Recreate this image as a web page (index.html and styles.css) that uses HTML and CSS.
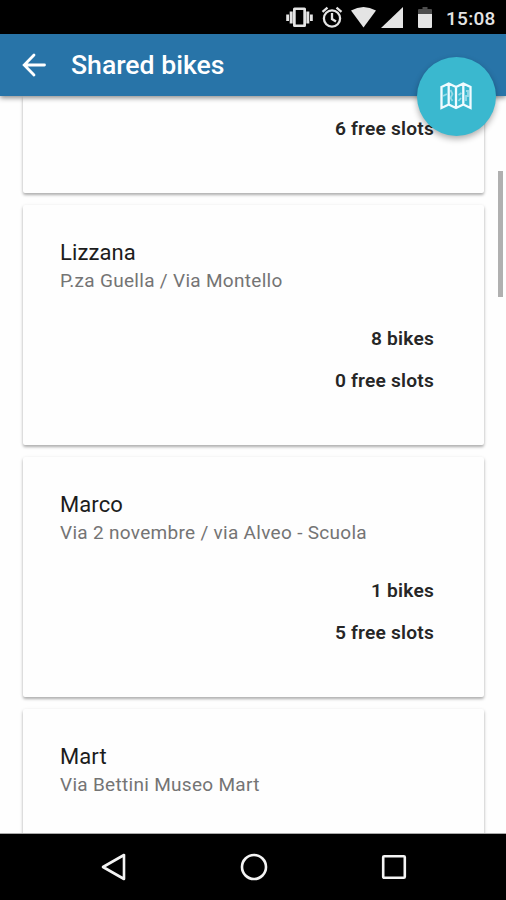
FILE: index.html
```html
<!DOCTYPE html>
<html lang="en">
<head>
<meta charset="utf-8">
<title>Shared bikes</title>
<link rel="stylesheet" href="styles.css">
</head>
<body>
<div class="screen">
  <div class="status">
    <svg class="status-icons" width="150" height="34" viewBox="284 0 150 34">
      <g fill="#e4e4e4">
        <path fill-rule="evenodd" d="M294.500 7.500h10a1.500 1.500 0 0 1 1.500 1.500v16.500a1.500 1.500 0 0 1-1.500 1.500h-10a1.500 1.500 0 0 1-1.500-1.500V9a1.500 1.500 0 0 1 1.500-1.500zM295.700 10v14.500h7.600V10z"/>
        <path d="M289.700 11.500h3v12h-3zM306.300 11.500h3v12h-3zM286.200 14.500h2.800v6.500h-2.800zM310 14.500h2.800v6.500h-2.800z"/>
        <path d="M351 10.500Q363.500 3.500 376 10.500L363.500 27.500z"/>
        <path d="M403 7v21h-22z"/>
        <path d="M418 14h14v13a1 1 0 0 1-1 1h-12a1 1 0 0 1-1-1z"/>
      </g>
      <path fill="#4d4d4d" d="M418 14v-4a1 1 0 0 1 1-1h3.500V7h5v2h3.500a1 1 0 0 1 1 1v4z"/>
      <g fill="none" stroke="#e4e4e4" stroke-width="2.300">
        <circle cx="332" cy="18.500" r="8.100"/>
        <path d="M332 13v6l4 2.500M322.500 11.800l5-4.100M341.500 11.800l-5-4.100"/>
      </g>
    </svg>
    <span class="clock">15:08</span>
  </div>
  <header class="appbar">
    <svg class="back" width="24" height="24" viewBox="0 0 24 24"><path d="M22.500 12H2.500M12 2L2.200 12l9.800 10"/></svg>
    <h1>Shared bikes</h1>
    <button class="fab" aria-label="Map">
      <svg width="32" height="28" viewBox="0 0 32 28">
        <path d="M1.500 5L8.700 1.500 16 5l7.300-3.500L30.500 5v21l-7.200-3.500L16 26l-7.300-3.500L1.500 26zM8.700 1.500v21M16 5v21M23.300 1.500v21"/>
        <path class="fold" d="M3 14l4-2M10.500 8l2 4-2 4 2 3M18.500 13l3-2M18.500 19l2.500-3M26 9h2v5h-2v5"/>
      </svg>
    </button>
  </header>
  <main class="list">
    <article class="card partial">
      <p class="count">6 free slots</p>
    </article>
    <article class="card">
      <h2>Lizzana</h2>
      <p class="address">P.za Guella / Via Montello</p>
      <p class="count first">8 bikes</p>
      <p class="count">0 free slots</p>
    </article>
    <article class="card">
      <h2>Marco</h2>
      <p class="address">Via 2 novembre / via Alveo - Scuola</p>
      <p class="count first">1 bikes</p>
      <p class="count">5 free slots</p>
    </article>
    <article class="card">
      <h2>Mart</h2>
      <p class="address">Via Bettini Museo Mart</p>
    </article>
    <div class="scrollbar"></div>
  </main>
  <nav class="navbar">
    <svg width="28" height="30" viewBox="0 0 28 30"><path d="M24 3v24L3 15z"/></svg>
    <svg width="28" height="30" viewBox="0 0 28 30"><circle cx="14" cy="15" r="12"/></svg>
    <svg width="28" height="30" viewBox="0 0 28 30"><rect x="3.200" y="4.200" width="21.600" height="21.600" rx="1"/></svg>
  </nav>
</div>
</body>
</html>
```
FILE: styles.css
```css
* {
  box-sizing: border-box;
}

body {
  margin: 0;
  font-family: Roboto, "Liberation Sans", sans-serif;
}

h1, h2, p {
  margin: 0;
}

svg {
  display: block;
}

.screen {
  display: flex;
  flex-direction: column;
  width: 506px;
  height: 900px;
  overflow: hidden;
  background: #fefefe;
}

.status {
  flex: none;
  display: flex;
  align-items: center;
  justify-content: flex-end;
  gap: 12px;
  height: 34px;
  padding-right: 11px;
  background: #000;
}

.clock {
  width: 49px;
  padding-top: 3px;
  color: #e4e4e4;
  font-size: 19px;
  font-weight: 500;
  line-height: 24px;
  letter-spacing: 0.3px;
  white-space: nowrap;
}

.appbar {
  position: relative;
  z-index: 1;
  flex: none;
  display: flex;
  align-items: center;
  gap: 25px;
  height: 62px;
  padding-left: 22px;
  background: #2874a8;
  box-shadow: 0 2px 5px rgba(0, 0, 0, 0.45);
}

.back {
  fill: none;
  stroke: #fff;
  stroke-width: 2.8;
  stroke-linecap: round;
}

h1 {
  color: #fff;
  font-size: 26.600px;
  font-weight: 500;
  line-height: 32px;
}

.fab {
  position: absolute;
  top: 22.500px;
  right: 10.500px;
  display: flex;
  align-items: center;
  justify-content: center;
  width: 79px;
  height: 79px;
  padding: 0;
  border: 0;
  border-radius: 50%;
  background: #3ab8cf;
  box-shadow: 0 3px 6px rgba(0, 0, 0, 0.32);
}

.fab svg {
  fill: none;
  stroke: #f0fbff;
  stroke-width: 2.3;
}

.fab .fold {
  stroke-width: 1.8;
  opacity: 0.5;
}

.list {
  position: relative;
  flex: 1;
  min-height: 0;
  overflow: hidden;
  border-bottom: 1px solid #aaa;
}

.card {
  height: 240px;
  margin: 0 22px 11.800px 23px;
  padding: 33.200px 50px 0 37px;
  border-radius: 2px;
  background: #fefefe;
  box-shadow: 0 2px 3px rgba(0, 0, 0, 0.28), 0 1px 4px rgba(0, 0, 0, 0.08);
}

.card.partial {
  height: 97.200px;
  padding-top: 11.600px;
  border-radius: 0 0 2px 2px;
}

h2 {
  color: #1c1c1c;
  font-size: 22px;
  font-weight: 400;
  line-height: 29px;
  letter-spacing: 0.1px;
}

.address {
  color: #747474;
  font-size: 19px;
  line-height: 28.800px;
  letter-spacing: 0.3px;
}

.count {
  color: #262626;
  font-size: 19.200px;
  font-weight: 600;
  line-height: 42px;
  letter-spacing: 0.2px;
  text-align: right;
}

.first {
  margin-top: 22px;
}

.scrollbar {
  position: absolute;
  top: 75px;
  right: 3px;
  width: 5px;
  height: 126px;
  background: #b0b0b0;
}

.navbar {
  flex: none;
  display: flex;
  align-items: center;
  justify-content: space-between;
  height: 66px;
  padding: 0 98px 0 99.500px;
  background: #000;
}

.navbar svg {
  fill: none;
  stroke: #f4f4f4;
  stroke-width: 2.6;
  stroke-linejoin: round;
}
```
